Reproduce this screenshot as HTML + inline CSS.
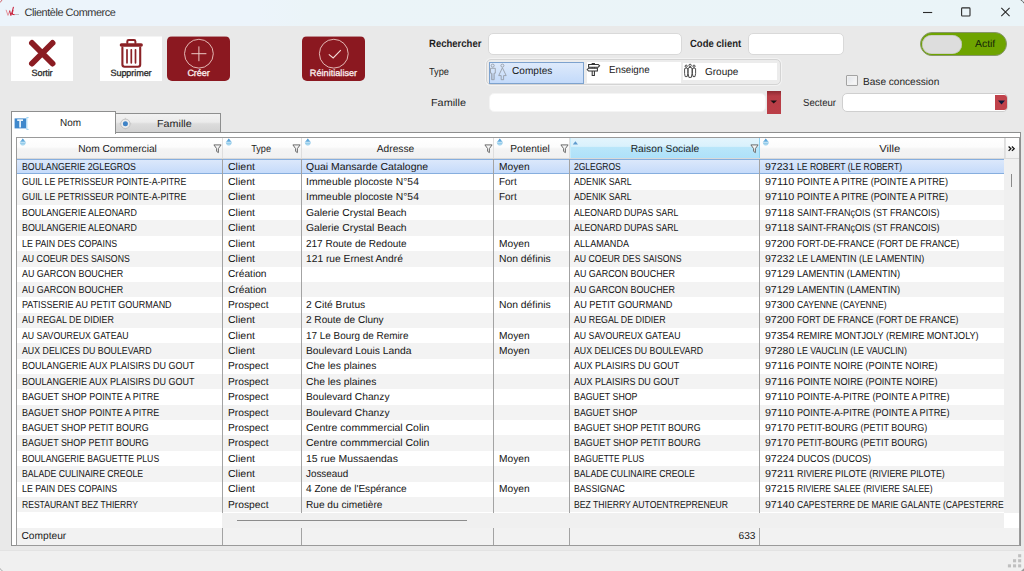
<!DOCTYPE html>
<html lang="fr"><head><meta charset="utf-8"><title>Clientèle Commerce</title>
<style>
*{box-sizing:border-box;margin:0;padding:0}
html,body{width:1024px;height:571px;overflow:hidden}
body{position:relative;background:#e9e9e9;font-family:"Liberation Sans",sans-serif;color:#1b1b1b;font-size:10px;text-rendering:geometricPrecision}
.abs,#titlebar,#panel,#grid,.btn,.lbl,.inp{position:absolute}
#titlebar{left:0;top:0;width:1024px;height:25.5px;background:linear-gradient(90deg,#ecf4fb 0%,#ecf4fb 25%,#ebf4f8 30%,#eaf4f8 100%)}
#title{position:absolute;left:24.5px;top:5.8px;font-size:10.9px;line-height:14px;color:#333;white-space:nowrap;letter-spacing:-0.43px}
#status{position:absolute;left:0;top:551px;width:1024px;height:20px;background:#f0f0f0}
/* big buttons */
.btn{top:36px;height:45px;width:62px;background:linear-gradient(rgba(255,255,255,.5) 0,rgba(255,255,255,.5) 1px,#fff 1px)}
.btn.red{background:linear-gradient(rgba(139,24,32,.45) 0,rgba(139,24,32,.45) 1px,#8b1820 1px);border-radius:5px}
.btn svg{top:1px!important}
.btn .t{position:absolute;left:0;right:0;top:31.8px;text-align:center;font-size:9.1px;line-height:10px;font-weight:normal;-webkit-text-stroke:0.3px #2a2a2a;color:#2a2a2a;white-space:nowrap;letter-spacing:-0.1px}
.btn.red .t{color:#fbeeee;-webkit-text-stroke:0.3px #fbeeee}
.btn svg{position:absolute;left:0;top:0}
/* labels */
.lbl{font-size:10.2px;line-height:12px;white-space:nowrap;color:#1e1e1e;transform-origin:0 50%}
.lbl.b{font-weight:bold;font-size:10.5px}
.inp{background:#fff;border:1px solid #d9d9d9;border-radius:5px}
/* type group */
#tg{position:absolute;left:486px;top:59px;width:295px;height:26px;border:1px solid #d4d4d4;border-radius:5px;background:#ececec;box-shadow:0 0 0 1px #f3f3f3}
.tb{position:absolute;background:#fff;font-size:10.2px;line-height:12px;white-space:nowrap}
.tb span{position:absolute;transform-origin:0 50%}
/* tabs */
#tabnom{position:absolute;left:11px;top:111px;width:105px;height:23px;background:#fff;border:1px solid #8e8f8f;border-bottom:none}
#tabfam{position:absolute;left:115px;top:113px;width:106px;height:20px;background:linear-gradient(#f2f2f2,#ebebeb 45%,#dcdcdc 55%,#d2d2d2);border:1px solid #8e8f8f}
.tabt{position:absolute;font-size:10.6px;line-height:12px;white-space:nowrap;color:#1e1e1e}
#panel{left:11px;top:132px;width:1010px;height:414px;background:#fff;border:1px solid #8e8f8f}
#grid{left:16px;top:137px;width:1004px;height:409px;border:1px solid #9a9a9a;background:#fff;overflow:hidden}
.row{position:absolute;left:0;width:987px;background:#fff}
.row.alt{background:#f3f3f3}
.row.sel{background:linear-gradient(#dde9fb,#c4dafa);box-shadow:inset 0 1px 0 #86aede,inset 0 -1px 0 #86aede}
.c{position:absolute;top:0;bottom:0;overflow:hidden;white-space:nowrap;font-size:10.2px;line-height:15px;padding-left:4.5px;color:#161616}
.c i{font-style:normal;display:inline-block;transform-origin:0 50%}
.vs{position:absolute;width:1px;background:#a3a3a3}
.hd{position:absolute;top:0;height:20px;background:linear-gradient(#ffffff 0%,#fcfcfc 45%,#f4f4f4 55%,#f1f1f1 100%);border-right:1px solid #dedede;font-size:10.2px;line-height:12px;text-align:center;color:#1e1e1e;white-space:nowrap}
.hd .ht{position:absolute;left:0;right:0;top:5.5px}
.hd.hl{background:linear-gradient(#e3f5fd 0%,#d9f1fc 42%,#b9e6fa 46%,#aee1f9 100%);border-right:1px solid #8fd0ee;box-shadow:inset 1px 0 0 #c5ebfb}
.hd svg{position:absolute}
.ft{position:absolute;font-size:10.2px;line-height:12px;white-space:nowrap;color:#1c1c1c}

</style></head>
<body>
<div id="titlebar">
<svg class="abs" style="left:0;top:0" width="24" height="26" viewBox="0 0 24 26"><path d="M0 2.2 Q1.4 1.8 1.9 0" fill="none" stroke="#cf5a62" stroke-width="0.9"/><path d="M6.2 10.2 L8 15.4 L9.7 11" fill="none" stroke="#e3929b" stroke-width="1" stroke-linejoin="round" stroke-linecap="round"/><path d="M9.7 11 L10.9 15.4 Q12.6 11.4 13.4 7.2" fill="none" stroke="#c8203a" stroke-width="1.05" stroke-linejoin="round" stroke-linecap="round"/><path d="M12.9 10.4 Q12.3 12.8 12.5 14.5 L14.3 14.6" fill="none" stroke="#c8203a" stroke-width="1" stroke-linecap="round"/><path d="M14.9 14.5 H19" stroke="#b4b4b8" stroke-width="0.8"/></svg>
<div id="title">Clientèle Commerce</div>
<svg class="abs" style="left:916px;top:0" width="108" height="26" viewBox="0 0 108 26"><path d="M7 12.5 H16.2" stroke="#2b2b2b" stroke-width="1.1" fill="none"/><rect x="45.6" y="7.9" width="8.4" height="8.1" rx="0.8" fill="none" stroke="#2b2b2b" stroke-width="1.1"/><path d="M85.3 7.8 L93.6 16.2 M93.6 7.8 L85.3 16.2" stroke="#2b2b2b" stroke-width="1.1" fill="none"/><path d="M104.6 0 Q107.2 0.8 108 3.4" stroke="#6a6a6a" stroke-width="1" fill="none"/></svg>
</div>
<div id="status"></div>
<svg class="abs" style="left:1004px;top:551px" width="20" height="20" viewBox="0 0 20 20"><g fill="#c0c0c0"><rect x="14.1" y="3.2" width="3.1" height="3.1"/><rect x="9" y="8.2" width="3.1" height="3.1"/><rect x="14.1" y="8.2" width="3.1" height="3.1"/><rect x="3.9" y="13.3" width="3.1" height="3.1"/><rect x="9" y="13.3" width="3.1" height="3.1"/><rect x="14.1" y="13.3" width="3.1" height="3.1"/></g><path d="M20 17.2 L17 20 L20 20 Z" fill="#9a9a9a"/></svg>
<svg class="abs" style="left:0;top:561px" width="10" height="10" viewBox="0 0 10 10"><path d="M0 7.2 Q0.6 9.4 2.8 10" fill="none" stroke="#b4b4b4" stroke-width="1"/></svg>
<div class="abs" style="left:0;top:550px;width:1024px;height:1px;background:#e3e3e3"></div>

<!-- big buttons -->
<div class="btn" style="left:11px"><svg width="62" height="44" viewBox="0 0 62 44"><path d="M21 6 L41.5 26.5 M41.5 6 L21 26.5" stroke="#8b1c22" stroke-width="5.9" stroke-linecap="round" fill="none"/></svg><div class="t" style="letter-spacing:-0.15px">Sortir</div></div>
<div class="btn" style="left:100px"><svg width="62" height="44" viewBox="0 0 62 44"><g fill="none" stroke="#8b2226" stroke-linecap="round" stroke-linejoin="round"><path d="M27.3 6 V4.4 Q27.3 3 28.7 3 H34 Q35.4 3 35.4 4.4 V6" stroke-width="2"/><path d="M21.4 8 H41.2" stroke-width="3.4"/><path d="M22.4 10.5 V27.6 Q22.4 29.8 24.6 29.8 H38 Q40.2 29.8 40.2 27.6 V10.5" stroke-width="2.1"/><path d="M27 12.8 V25.8 M31.3 12.8 V25.8 M35.5 12.8 V25.8" stroke-width="1.7"/></g></svg><div class="t">Supprimer</div></div>
<div class="btn red" style="left:167px;width:63px"><svg width="63" height="44" viewBox="0 0 63 44"><circle cx="31.9" cy="16.7" r="14.4" fill="none" stroke="#ecc9c4" stroke-width="0.9"/><path d="M24.4 16.7 H39.4 M31.9 9.4 V24.2" stroke="#ecc9c4" stroke-width="1" fill="none"/></svg><div class="t">Créer</div></div>
<div class="btn red" style="left:302px;width:63px"><svg width="63" height="44" viewBox="0 0 63 44"><circle cx="31.8" cy="16.7" r="14.4" fill="none" stroke="#ecc9c4" stroke-width="0.9"/><path d="M26.8 17.3 L31.2 21 L38.8 13.1" stroke="#f4dcd8" stroke-width="1.1" fill="none"/></svg><div class="t" style="letter-spacing:0.02px">Réinitialiser</div></div>

<!-- search area -->
<div class="lbl b" style="left:428.8px;top:38.1px;transform:scaleX(0.907)">Rechercher</div>
<div class="inp" style="left:488px;top:33px;width:194px;height:22px"></div>
<div class="lbl b" style="left:689.6px;top:38.1px;transform:scaleX(0.903)">Code client</div>
<div class="inp" style="left:748px;top:33px;width:96px;height:22px"></div>

<div class="lbl" style="left:429px;top:67.3px;transform:scaleX(0.905)">Type</div>
<div id="tg">
 <div class="tb" style="left:2px;top:1.5px;width:95px;height:22px;background:linear-gradient(#deeafb,#c3dafa);border:1px solid #7da2ce">
  <svg style="position:absolute;left:0;top:0" width="20" height="20" viewBox="0 0 20 20"><g fill="none" stroke="#8f969e" stroke-width="0.8"><circle cx="2.7" cy="2.6" r="1.5"/><path d="M0.5 5.3 H5.3 V10.2 H4.2 V16.7 H1.6 V10.2 H0.5 Z"/><path d="M2.9 10.4 V16.4" stroke-width="0.5"/><circle cx="12.4" cy="2.6" r="1.5"/><path d="M12.4 4.8 L8.7 12.6 H11.2 V16.7 H13.6 V12.6 H16.2 Z"/></g></svg>
  <span style="left:21.8px;top:3.1px;transform:scaleX(0.99)">Comptes</span></div>
 <div class="tb" style="left:100px;top:2px;width:93.5px;height:21px">
  <svg style="position:absolute;left:-1px;top:0px" width="16" height="16" viewBox="0 0 16 16"><g fill="none" stroke="#333" stroke-width="1.05"><path d="M6.2 1.4 H8.4 V13.4 H6.2 Z"/><path d="M2.6 2.4 H12.2 L13.6 3.8 L12.2 5.2 H2.6 Z" fill="#fff"/><path d="M1.2 7.6 L2.6 6.2 H11.4 V9 H2.6 Z" fill="#fff"/></g></svg>
  <span style="left:21.6px;top:3.3px;transform:scaleX(0.956)">Enseigne</span></div>
 <div class="tb" style="left:196px;top:2.5px;width:94px;height:17.5px">
  <svg style="position:absolute;left:0.2px;top:0px" width="16" height="16" viewBox="0 0 16 16"><g fill="#fff" stroke="#3a3a3a" stroke-width="0.9"><circle cx="3.2" cy="3.2" r="1.1"/><path d="M1.6 5.6 Q3.2 4.4 4.8 5.6 V10.6 L4.2 13.6 H2.2 L1.6 10.6 Z"/><circle cx="11" cy="3.2" r="1.1"/><path d="M9.4 5.6 Q11 4.4 12.6 5.6 V10.6 L12 13.6 H10 L9.4 10.6 Z"/><circle cx="7.1" cy="2.4" r="1.2"/><path d="M5.2 5 Q7.1 3.6 9 5 V10.8 L8.3 14.4 H5.9 L5.2 10.8 Z"/></g></svg>
  <span style="left:22px;top:4.4px;transform:scaleX(0.98)">Groupe</span></div>
</div>

<div class="lbl" style="left:430.5px;top:97.9px;transform:scaleX(1.063)">Famille</div>
<div class="inp" style="left:489px;top:93px;width:277px;height:19px;border-color:#f4f4f4"></div>
<div class="abs" style="left:767px;top:91px;width:13.5px;height:23px;background:linear-gradient(#8e2a32 0%,#b73c45 22%,#bb3f48 100%)"><svg style="position:absolute;left:0;top:0" width="14" height="22" viewBox="0 0 14 22"><path d="M3.4 9.4 H10 L6.7 12.6 Z" fill="#1a1114"/></svg></div>

<!-- toggle -->
<div class="abs" style="left:920px;top:32px;width:87px;height:24px;border-radius:12px;background:#6ea400;border:1px solid #87976a"></div>
<div class="abs" style="left:922px;top:34.5px;width:39.5px;height:19.5px;border-radius:10px;background:#dddddd;box-shadow:inset 0 0 0 0.6px #b9c2a8"></div>
<div class="lbl" style="left:974.8px;top:38.8px;color:#14230a;transform:scaleX(1.02)">Actif</div>

<div class="abs" style="left:846px;top:75px;width:12px;height:11px;border:1px solid #a3a3a3;border-radius:1px;background:linear-gradient(135deg,#dde1e8,#f6f6f6 75%);box-shadow:inset 0 0 0 1.2px #f1f1f1"></div>
<div class="lbl" style="left:863.4px;top:77px;transform:scaleX(0.99)">Base concession</div>

<div class="lbl" style="left:803.2px;top:97.6px;transform:scaleX(0.94)">Secteur</div>
<div class="inp" style="left:842px;top:93px;width:166px;height:19px;border-color:#cfcfcf"></div>
<div class="abs" style="left:994.5px;top:95px;width:12.5px;height:14.5px;background:#c0424b;border-radius:0 3px 3px 0"><svg style="position:absolute;left:0;top:0" width="13" height="15" viewBox="0 0 13 15"><path d="M3 5.6 H10 L6.5 9.4 Z" fill="#0e1a3c"/></svg></div>

<!-- tabs -->
<div id="tabfam"><svg style="position:absolute;left:2px;top:2px" width="16" height="16" viewBox="0 0 16 16"><circle cx="7.4" cy="7.8" r="4.7" fill="#ececec" stroke="#b9b9b9" stroke-width="0.8"/><path d="M7.4 1.8 V3.6 M7.4 12 V13.8 M1.4 7.8 H3.2 M11.6 7.8 H13.4" stroke="#c4c4c4" stroke-width="0.7"/><circle cx="7.4" cy="7.8" r="2.5" fill="#3f83c6"/></svg><div class="tabt" style="left:40.7px;top:5px;font-size:10.2px;transform-origin:0 50%;transform:scaleX(1.055)">Famille</div></div>
<div id="panel"></div>
<div id="tabnom"><svg style="position:absolute;left:1.5px;top:5px" width="16" height="14" viewBox="0 0 16 14"><rect x="0.6" y="1.4" width="11.4" height="10" fill="#3f88cc"/><path d="M12.4 0.6 H14.6 M12.4 12.4 H14.6 M12.8 1 V12" stroke="#7dc3ee" stroke-width="0.8" fill="none"/><path d="M3.2 3.2 H9 M6.1 3.2 V10.4" stroke="#e9f4fc" stroke-width="1.7" fill="none"/></svg><div class="tabt" style="left:48.2px;top:6.2px;font-size:10.2px;transform-origin:0 50%;transform:scaleX(0.977)">Nom</div></div>
<div id="grid">
<div class="row sel" style="top:21px;height:15px"><span class="c c0" style="left:0px;width:205px;padding-left:4.6px"><i style="transform:translateY(0.75px) scaleX(0.8590)">BOULANGERIE 2GLEGROS</i></span><span class="c c1" style="left:206px;width:78px;padding-left:4.7px"><i style="transform:translateY(0.75px) scaleX(1.0328)">Client</i></span><span class="c c2" style="left:285px;width:191px;padding-left:3.9px"><i style="transform:translateY(0.75px) scaleX(1.0266)">Quai Mansarde Catalogne</i></span><span class="c c3" style="left:477px;width:75px;padding-left:4.7px"><i style="transform:translateY(0.75px) scaleX(1.0007)">Moyen</i></span><span class="c c4" style="left:553px;width:189px;padding-left:4.3px"><i style="transform:translateY(0.75px) scaleX(0.8348)">2GLEGROS</i></span><span class="c c5" style="left:743px;width:244px;padding-left:4.5px"><i style="width:32.3px;transform:translateY(0.75px) scaleX(1.0362)">97231&nbsp;</i><i style="transform:translateY(0.75px) scaleX(0.8430)">LE ROBERT (LE ROBERT)</i></span></div>
<div class="row" style="top:36px;height:16px"><span class="c c0" style="left:0px;width:205px;padding-left:4.6px"><i style="transform:translateY(1.11px) scaleX(0.8604)">GUIL LE PETRISSEUR POINTE-A-PITRE</i></span><span class="c c1" style="left:206px;width:78px;padding-left:4.7px"><i style="transform:translateY(1.11px) scaleX(1.0328)">Client</i></span><span class="c c2" style="left:285px;width:191px;padding-left:3.9px"><i style="transform:translateY(1.11px) scaleX(1.0161)">Immeuble plocoste N°54</i></span><span class="c c3" style="left:477px;width:75px;padding-left:4.7px"><i style="transform:translateY(1.11px) scaleX(0.9766)">Fort</i></span><span class="c c4" style="left:553px;width:189px;padding-left:4.3px"><i style="transform:translateY(1.11px) scaleX(0.8534)">ADENIK SARL</i></span><span class="c c5" style="left:743px;width:244px;padding-left:4.5px"><i style="width:32.3px;transform:translateY(1.11px) scaleX(1.0623)">97110&nbsp;</i><i style="transform:translateY(1.11px) scaleX(0.8981)">POINTE A PITRE (POINTE A PITRE)</i></span></div>
<div class="row alt" style="top:52px;height:15px"><span class="c c0" style="left:0px;width:205px;padding-left:4.6px"><i style="transform:translateY(0.47px) scaleX(0.8604)">GUIL LE PETRISSEUR POINTE-A-PITRE</i></span><span class="c c1" style="left:206px;width:78px;padding-left:4.7px"><i style="transform:translateY(0.47px) scaleX(1.0328)">Client</i></span><span class="c c2" style="left:285px;width:191px;padding-left:3.9px"><i style="transform:translateY(0.47px) scaleX(1.0161)">Immeuble plocoste N°54</i></span><span class="c c3" style="left:477px;width:75px;padding-left:4.7px"><i style="transform:translateY(0.47px) scaleX(0.9766)">Fort</i></span><span class="c c4" style="left:553px;width:189px;padding-left:4.3px"><i style="transform:translateY(0.47px) scaleX(0.8534)">ADENIK SARL</i></span><span class="c c5" style="left:743px;width:244px;padding-left:4.5px"><i style="width:32.3px;transform:translateY(0.47px) scaleX(1.0623)">97110&nbsp;</i><i style="transform:translateY(0.47px) scaleX(0.8981)">POINTE A PITRE (POINTE A PITRE)</i></span></div>
<div class="row" style="top:67px;height:15px"><span class="c c0" style="left:0px;width:205px;padding-left:4.6px"><i style="transform:translateY(0.83px) scaleX(0.8702)">BOULANGERIE ALEONARD</i></span><span class="c c1" style="left:206px;width:78px;padding-left:4.7px"><i style="transform:translateY(0.83px) scaleX(1.0328)">Client</i></span><span class="c c2" style="left:285px;width:191px;padding-left:3.9px"><i style="transform:translateY(0.83px) scaleX(1.0152)">Galerie Crystal Beach</i></span><span class="c c4" style="left:553px;width:189px;padding-left:4.3px"><i style="transform:translateY(0.83px) scaleX(0.8502)">ALEONARD DUPAS SARL</i></span><span class="c c5" style="left:743px;width:244px;padding-left:4.5px"><i style="width:32.3px;transform:translateY(0.83px) scaleX(1.0623)">97118&nbsp;</i><i style="transform:translateY(0.83px) scaleX(0.8844)">SAINT-FRANçOIS (ST FRANCOIS)</i></span></div>
<div class="row alt" style="top:82px;height:16px"><span class="c c0" style="left:0px;width:205px;padding-left:4.6px"><i style="transform:translateY(1.19px) scaleX(0.8702)">BOULANGERIE ALEONARD</i></span><span class="c c1" style="left:206px;width:78px;padding-left:4.7px"><i style="transform:translateY(1.19px) scaleX(1.0328)">Client</i></span><span class="c c2" style="left:285px;width:191px;padding-left:3.9px"><i style="transform:translateY(1.19px) scaleX(1.0152)">Galerie Crystal Beach</i></span><span class="c c4" style="left:553px;width:189px;padding-left:4.3px"><i style="transform:translateY(1.19px) scaleX(0.8502)">ALEONARD DUPAS SARL</i></span><span class="c c5" style="left:743px;width:244px;padding-left:4.5px"><i style="width:32.3px;transform:translateY(1.19px) scaleX(1.0623)">97118&nbsp;</i><i style="transform:translateY(1.19px) scaleX(0.8844)">SAINT-FRANçOIS (ST FRANCOIS)</i></span></div>
<div class="row" style="top:98px;height:15px"><span class="c c0" style="left:0px;width:205px;padding-left:4.6px"><i style="transform:translateY(0.55px) scaleX(0.8652)">LE PAIN DES COPAINS</i></span><span class="c c1" style="left:206px;width:78px;padding-left:4.7px"><i style="transform:translateY(0.55px) scaleX(1.0328)">Client</i></span><span class="c c2" style="left:285px;width:191px;padding-left:3.9px"><i style="transform:translateY(0.55px) scaleX(0.9812)">217 Route de Redoute</i></span><span class="c c3" style="left:477px;width:75px;padding-left:4.7px"><i style="transform:translateY(0.55px) scaleX(1.0007)">Moyen</i></span><span class="c c4" style="left:553px;width:189px;padding-left:4.3px"><i style="transform:translateY(0.55px) scaleX(0.8911)">ALLAMANDA</i></span><span class="c c5" style="left:743px;width:244px;padding-left:4.5px"><i style="width:32.3px;transform:translateY(0.55px) scaleX(1.0362)">97200&nbsp;</i><i style="transform:translateY(0.55px) scaleX(0.8605)">FORT-DE-FRANCE (FORT DE FRANCE)</i></span></div>
<div class="row alt" style="top:113px;height:16px"><span class="c c0" style="left:0px;width:205px;padding-left:4.6px"><i style="transform:translateY(0.91px) scaleX(0.8577)">AU COEUR DES SAISONS</i></span><span class="c c1" style="left:206px;width:78px;padding-left:4.7px"><i style="transform:translateY(0.91px) scaleX(1.0328)">Client</i></span><span class="c c2" style="left:285px;width:191px;padding-left:3.9px"><i style="transform:translateY(0.91px) scaleX(1.0064)">121 rue Ernest André</i></span><span class="c c3" style="left:477px;width:75px;padding-left:4.7px"><i style="transform:translateY(0.91px) scaleX(1.0143)">Non définis</i></span><span class="c c4" style="left:553px;width:189px;padding-left:4.3px"><i style="transform:translateY(0.91px) scaleX(0.8569)">AU COEUR DES SAISONS</i></span><span class="c c5" style="left:743px;width:244px;padding-left:4.5px"><i style="width:32.3px;transform:translateY(0.91px) scaleX(1.0362)">97232&nbsp;</i><i style="transform:translateY(0.91px) scaleX(0.8895)">LE LAMENTIN (LE LAMENTIN)</i></span></div>
<div class="row" style="top:129px;height:15px"><span class="c c0" style="left:0px;width:205px;padding-left:4.6px"><i style="transform:translateY(0.27px) scaleX(0.8754)">AU GARCON BOUCHER</i></span><span class="c c1" style="left:206px;width:78px;padding-left:4.7px"><i style="transform:translateY(0.27px) scaleX(0.9996)">Création</i></span><span class="c c4" style="left:553px;width:189px;padding-left:4.3px"><i style="transform:translateY(0.27px) scaleX(0.8746)">AU GARCON BOUCHER</i></span><span class="c c5" style="left:743px;width:244px;padding-left:4.5px"><i style="width:32.3px;transform:translateY(0.27px) scaleX(1.0362)">97129&nbsp;</i><i style="transform:translateY(0.27px) scaleX(0.9162)">LAMENTIN (LAMENTIN)</i></span></div>
<div class="row alt" style="top:144px;height:15px"><span class="c c0" style="left:0px;width:205px;padding-left:4.6px"><i style="transform:translateY(0.63px) scaleX(0.8754)">AU GARCON BOUCHER</i></span><span class="c c1" style="left:206px;width:78px;padding-left:4.7px"><i style="transform:translateY(0.63px) scaleX(0.9996)">Création</i></span><span class="c c4" style="left:553px;width:189px;padding-left:4.3px"><i style="transform:translateY(0.63px) scaleX(0.8746)">AU GARCON BOUCHER</i></span><span class="c c5" style="left:743px;width:244px;padding-left:4.5px"><i style="width:32.3px;transform:translateY(0.63px) scaleX(1.0362)">97129&nbsp;</i><i style="transform:translateY(0.63px) scaleX(0.9162)">LAMENTIN (LAMENTIN)</i></span></div>
<div class="row" style="top:159px;height:16px"><span class="c c0" style="left:0px;width:205px;padding-left:4.6px"><i style="transform:translateY(0.99px) scaleX(0.8809)">PATISSERIE AU PETIT GOURMAND</i></span><span class="c c1" style="left:206px;width:78px;padding-left:4.7px"><i style="transform:translateY(0.99px) scaleX(1.0074)">Prospect</i></span><span class="c c2" style="left:285px;width:191px;padding-left:3.9px"><i style="transform:translateY(0.99px) scaleX(1.0053)">2 Cité Brutus</i></span><span class="c c3" style="left:477px;width:75px;padding-left:4.7px"><i style="transform:translateY(0.99px) scaleX(1.0143)">Non définis</i></span><span class="c c4" style="left:553px;width:189px;padding-left:4.3px"><i style="transform:translateY(0.99px) scaleX(0.9032)">AU PETIT GOURMAND</i></span><span class="c c5" style="left:743px;width:244px;padding-left:4.5px"><i style="width:32.3px;transform:translateY(0.99px) scaleX(1.0362)">97300&nbsp;</i><i style="transform:translateY(0.99px) scaleX(0.8395)">CAYENNE (CAYENNE)</i></span></div>
<div class="row alt" style="top:175px;height:15px"><span class="c c0" style="left:0px;width:205px;padding-left:4.6px"><i style="transform:translateY(0.35px) scaleX(0.8712)">AU REGAL DE DIDIER</i></span><span class="c c1" style="left:206px;width:78px;padding-left:4.7px"><i style="transform:translateY(0.35px) scaleX(1.0328)">Client</i></span><span class="c c2" style="left:285px;width:191px;padding-left:3.9px"><i style="transform:translateY(0.35px) scaleX(0.9856)">2 Route de Cluny</i></span><span class="c c4" style="left:553px;width:189px;padding-left:4.3px"><i style="transform:translateY(0.35px) scaleX(0.8684)">AU REGAL DE DIDIER</i></span><span class="c c5" style="left:743px;width:244px;padding-left:4.5px"><i style="width:32.3px;transform:translateY(0.35px) scaleX(1.0362)">97200&nbsp;</i><i style="transform:translateY(0.35px) scaleX(0.8597)">FORT DE FRANCE (FORT DE FRANCE)</i></span></div>
<div class="row" style="top:190px;height:15px"><span class="c c0" style="left:0px;width:205px;padding-left:4.6px"><i style="transform:translateY(0.71px) scaleX(0.8593)">AU SAVOUREUX GATEAU</i></span><span class="c c1" style="left:206px;width:78px;padding-left:4.7px"><i style="transform:translateY(0.71px) scaleX(1.0328)">Client</i></span><span class="c c2" style="left:285px;width:191px;padding-left:3.9px"><i style="transform:translateY(0.71px) scaleX(0.9721)">17 Le Bourg de Remire</i></span><span class="c c3" style="left:477px;width:75px;padding-left:4.7px"><i style="transform:translateY(0.71px) scaleX(1.0007)">Moyen</i></span><span class="c c4" style="left:553px;width:189px;padding-left:4.3px"><i style="transform:translateY(0.71px) scaleX(0.8577)">AU SAVOUREUX GATEAU</i></span><span class="c c5" style="left:743px;width:244px;padding-left:4.5px"><i style="width:32.3px;transform:translateY(0.71px) scaleX(1.0362)">97354&nbsp;</i><i style="transform:translateY(0.71px) scaleX(0.8912)">REMIRE MONTJOLY (REMIRE MONTJOLY)</i></span></div>
<div class="row alt" style="top:205px;height:16px"><span class="c c0" style="left:0px;width:205px;padding-left:4.6px"><i style="transform:translateY(1.07px) scaleX(0.8642)">AUX DELICES DU BOULEVARD</i></span><span class="c c1" style="left:206px;width:78px;padding-left:4.7px"><i style="transform:translateY(1.07px) scaleX(1.0328)">Client</i></span><span class="c c2" style="left:285px;width:191px;padding-left:3.9px"><i style="transform:translateY(1.07px) scaleX(1.0113)">Boulevard Louis Landa</i></span><span class="c c3" style="left:477px;width:75px;padding-left:4.7px"><i style="transform:translateY(1.07px) scaleX(1.0007)">Moyen</i></span><span class="c c4" style="left:553px;width:189px;padding-left:4.3px"><i style="transform:translateY(1.07px) scaleX(0.8616)">AUX DELICES DU BOULEVARD</i></span><span class="c c5" style="left:743px;width:244px;padding-left:4.5px"><i style="width:32.3px;transform:translateY(1.07px) scaleX(1.0362)">97280&nbsp;</i><i style="transform:translateY(1.07px) scaleX(0.8654)">LE VAUCLIN (LE VAUCLIN)</i></span></div>
<div class="row" style="top:221px;height:15px"><span class="c c0" style="left:0px;width:205px;padding-left:4.6px"><i style="transform:translateY(0.43px) scaleX(0.8827)">BOULANGERIE AUX PLAISIRS DU GOUT</i></span><span class="c c1" style="left:206px;width:78px;padding-left:4.7px"><i style="transform:translateY(0.43px) scaleX(1.0074)">Prospect</i></span><span class="c c2" style="left:285px;width:191px;padding-left:3.9px"><i style="transform:translateY(0.43px) scaleX(1.0107)">Che les plaines</i></span><span class="c c4" style="left:553px;width:189px;padding-left:4.3px"><i style="transform:translateY(0.43px) scaleX(0.8815)">AUX PLAISIRS DU GOUT</i></span><span class="c c5" style="left:743px;width:244px;padding-left:4.5px"><i style="width:32.3px;transform:translateY(0.43px) scaleX(1.0623)">97116&nbsp;</i><i style="transform:translateY(0.43px) scaleX(0.9026)">POINTE NOIRE (POINTE NOIRE)</i></span></div>
<div class="row alt" style="top:236px;height:15px"><span class="c c0" style="left:0px;width:205px;padding-left:4.6px"><i style="transform:translateY(0.79px) scaleX(0.8827)">BOULANGERIE AUX PLAISIRS DU GOUT</i></span><span class="c c1" style="left:206px;width:78px;padding-left:4.7px"><i style="transform:translateY(0.79px) scaleX(1.0074)">Prospect</i></span><span class="c c2" style="left:285px;width:191px;padding-left:3.9px"><i style="transform:translateY(0.79px) scaleX(1.0107)">Che les plaines</i></span><span class="c c4" style="left:553px;width:189px;padding-left:4.3px"><i style="transform:translateY(0.79px) scaleX(0.8815)">AUX PLAISIRS DU GOUT</i></span><span class="c c5" style="left:743px;width:244px;padding-left:4.5px"><i style="width:32.3px;transform:translateY(0.79px) scaleX(1.0623)">97116&nbsp;</i><i style="transform:translateY(0.79px) scaleX(0.9026)">POINTE NOIRE (POINTE NOIRE)</i></span></div>
<div class="row" style="top:251px;height:16px"><span class="c c0" style="left:0px;width:205px;padding-left:4.6px"><i style="transform:translateY(1.15px) scaleX(0.8834)">BAGUET SHOP POINTE A PITRE</i></span><span class="c c1" style="left:206px;width:78px;padding-left:4.7px"><i style="transform:translateY(1.15px) scaleX(1.0074)">Prospect</i></span><span class="c c2" style="left:285px;width:191px;padding-left:3.9px"><i style="transform:translateY(1.15px) scaleX(1.0030)">Boulevard Chanzy</i></span><span class="c c4" style="left:553px;width:189px;padding-left:4.3px"><i style="transform:translateY(1.15px) scaleX(0.8649)">BAGUET SHOP</i></span><span class="c c5" style="left:743px;width:244px;padding-left:4.5px"><i style="width:32.3px;transform:translateY(1.15px) scaleX(1.0623)">97110&nbsp;</i><i style="transform:translateY(1.15px) scaleX(0.8950)">POINTE-A-PITRE (POINTE A PITRE)</i></span></div>
<div class="row alt" style="top:267px;height:15px"><span class="c c0" style="left:0px;width:205px;padding-left:4.6px"><i style="transform:translateY(0.51px) scaleX(0.8834)">BAGUET SHOP POINTE A PITRE</i></span><span class="c c1" style="left:206px;width:78px;padding-left:4.7px"><i style="transform:translateY(0.51px) scaleX(1.0074)">Prospect</i></span><span class="c c2" style="left:285px;width:191px;padding-left:3.9px"><i style="transform:translateY(0.51px) scaleX(1.0030)">Boulevard Chanzy</i></span><span class="c c4" style="left:553px;width:189px;padding-left:4.3px"><i style="transform:translateY(0.51px) scaleX(0.8649)">BAGUET SHOP</i></span><span class="c c5" style="left:743px;width:244px;padding-left:4.5px"><i style="width:32.3px;transform:translateY(0.51px) scaleX(1.0623)">97110&nbsp;</i><i style="transform:translateY(0.51px) scaleX(0.8950)">POINTE-A-PITRE (POINTE A PITRE)</i></span></div>
<div class="row" style="top:282px;height:15px"><span class="c c0" style="left:0px;width:205px;padding-left:4.6px"><i style="transform:translateY(0.87px) scaleX(0.8742)">BAGUET SHOP PETIT BOURG</i></span><span class="c c1" style="left:206px;width:78px;padding-left:4.7px"><i style="transform:translateY(0.87px) scaleX(1.0074)">Prospect</i></span><span class="c c2" style="left:285px;width:191px;padding-left:3.9px"><i style="transform:translateY(0.87px) scaleX(1.0281)">Centre commmercial Colin</i></span><span class="c c4" style="left:553px;width:189px;padding-left:4.3px"><i style="transform:translateY(0.87px) scaleX(0.8735)">BAGUET SHOP PETIT BOURG</i></span><span class="c c5" style="left:743px;width:244px;padding-left:4.5px"><i style="width:32.3px;transform:translateY(0.87px) scaleX(1.0362)">97170&nbsp;</i><i style="transform:translateY(0.87px) scaleX(0.8831)">PETIT-BOURG (PETIT BOURG)</i></span></div>
<div class="row alt" style="top:297px;height:16px"><span class="c c0" style="left:0px;width:205px;padding-left:4.6px"><i style="transform:translateY(1.23px) scaleX(0.8742)">BAGUET SHOP PETIT BOURG</i></span><span class="c c1" style="left:206px;width:78px;padding-left:4.7px"><i style="transform:translateY(1.23px) scaleX(1.0074)">Prospect</i></span><span class="c c2" style="left:285px;width:191px;padding-left:3.9px"><i style="transform:translateY(1.23px) scaleX(1.0281)">Centre commmercial Colin</i></span><span class="c c4" style="left:553px;width:189px;padding-left:4.3px"><i style="transform:translateY(1.23px) scaleX(0.8735)">BAGUET SHOP PETIT BOURG</i></span><span class="c c5" style="left:743px;width:244px;padding-left:4.5px"><i style="width:32.3px;transform:translateY(1.23px) scaleX(1.0362)">97170&nbsp;</i><i style="transform:translateY(1.23px) scaleX(0.8831)">PETIT-BOURG (PETIT BOURG)</i></span></div>
<div class="row" style="top:313px;height:15px"><span class="c c0" style="left:0px;width:205px;padding-left:4.6px"><i style="transform:translateY(0.59px) scaleX(0.8533)">BOULANGERIE BAGUETTE PLUS</i></span><span class="c c1" style="left:206px;width:78px;padding-left:4.7px"><i style="transform:translateY(0.59px) scaleX(1.0328)">Client</i></span><span class="c c2" style="left:285px;width:191px;padding-left:3.9px"><i style="transform:translateY(0.59px) scaleX(1.0270)">15 rue Mussaendas</i></span><span class="c c3" style="left:477px;width:75px;padding-left:4.7px"><i style="transform:translateY(0.59px) scaleX(1.0007)">Moyen</i></span><span class="c c4" style="left:553px;width:189px;padding-left:4.3px"><i style="transform:translateY(0.59px) scaleX(0.8322)">BAGUETTE PLUS</i></span><span class="c c5" style="left:743px;width:244px;padding-left:4.5px"><i style="width:32.3px;transform:translateY(0.59px) scaleX(1.0362)">97224&nbsp;</i><i style="transform:translateY(0.59px) scaleX(0.8906)">DUCOS (DUCOS)</i></span></div>
<div class="row alt" style="top:328px;height:16px"><span class="c c0" style="left:0px;width:205px;padding-left:4.6px"><i style="transform:translateY(0.95px) scaleX(0.8515)">BALADE CULINAIRE CREOLE</i></span><span class="c c1" style="left:206px;width:78px;padding-left:4.7px"><i style="transform:translateY(0.95px) scaleX(1.0328)">Client</i></span><span class="c c2" style="left:285px;width:191px;padding-left:3.9px"><i style="transform:translateY(0.95px) scaleX(0.9673)">Josseaud</i></span><span class="c c4" style="left:553px;width:189px;padding-left:4.3px"><i style="transform:translateY(0.95px) scaleX(0.8508)">BALADE CULINAIRE CREOLE</i></span><span class="c c5" style="left:743px;width:244px;padding-left:4.5px"><i style="width:32.3px;transform:translateY(0.95px) scaleX(1.0623)">97211&nbsp;</i><i style="transform:translateY(0.95px) scaleX(0.8732)">RIVIERE PILOTE (RIVIERE PILOTE)</i></span></div>
<div class="row" style="top:344px;height:15px"><span class="c c0" style="left:0px;width:205px;padding-left:4.6px"><i style="transform:translateY(0.31px) scaleX(0.8652)">LE PAIN DES COPAINS</i></span><span class="c c1" style="left:206px;width:78px;padding-left:4.7px"><i style="transform:translateY(0.31px) scaleX(1.0328)">Client</i></span><span class="c c2" style="left:285px;width:191px;padding-left:3.9px"><i style="transform:translateY(0.31px) scaleX(0.9899)">4 Zone de l'Espérance</i></span><span class="c c3" style="left:477px;width:75px;padding-left:4.7px"><i style="transform:translateY(0.31px) scaleX(1.0007)">Moyen</i></span><span class="c c4" style="left:553px;width:189px;padding-left:4.3px"><i style="transform:translateY(0.31px) scaleX(0.8545)">BASSIGNAC</i></span><span class="c c5" style="left:743px;width:244px;padding-left:4.5px"><i style="width:32.3px;transform:translateY(0.31px) scaleX(1.0362)">97215&nbsp;</i><i style="transform:translateY(0.31px) scaleX(0.8345)">RIVIERE SALEE (RIVIERE SALEE)</i></span></div>
<div class="row alt" style="top:359px;height:15px"><span class="c c0" style="left:0px;width:205px;padding-left:4.6px"><i style="transform:translateY(0.67px) scaleX(0.8402)">RESTAURANT BEZ THIERRY</i></span><span class="c c1" style="left:206px;width:78px;padding-left:4.7px"><i style="transform:translateY(0.67px) scaleX(1.0074)">Prospect</i></span><span class="c c2" style="left:285px;width:191px;padding-left:3.9px"><i style="transform:translateY(0.67px) scaleX(0.9933)">Rue du cimetière</i></span><span class="c c4" style="left:553px;width:189px;padding-left:4.3px"><i style="transform:translateY(0.67px) scaleX(0.8483)">BEZ THIERRY AUTOENTREPRENEUR</i></span><span class="c c5" style="left:743px;width:244px;padding-left:4.5px"><i style="width:32.3px;transform:translateY(0.67px) scaleX(1.0362)">97140&nbsp;</i><i style="transform:translateY(0.67px) scaleX(0.8374)">CAPESTERRE DE MARIE GALANTE (CAPESTERRE</i></span></div>
<!-- scrollbars -->
<div class="abs" style="left:987px;top:21px;width:15px;height:354px;background:#f0f0f0"></div>
<div class="abs" style="left:994px;top:35.5px;width:1px;height:13.5px;background:#8a8a8a"></div>
<div class="abs" style="left:205px;top:374.5px;width:782px;height:15px;background:#f0f0f0"></div>
<div class="abs" style="left:220px;top:382px;width:230px;height:1px;background:#8c8c8c"></div>
<!-- footer -->
<div class="abs" style="left:0;top:389.5px;width:1002px;height:17.5px;background:#f2f2f2"></div>
<div class="ft" style="left:4.5px;top:393.2px">Compteur</div>
<div class="ft" style="left:700px;width:38.5px;text-align:right;top:393.2px">633</div>
<!-- vertical separators -->
<div class="vs" style="left:205px;top:21px;height:353.5px"></div><div class="vs" style="left:284px;top:21px;height:353.5px"></div><div class="vs" style="left:476px;top:21px;height:353.5px"></div><div class="vs" style="left:552px;top:21px;height:353.5px"></div><div class="vs" style="left:742px;top:21px;height:353.5px"></div>
<div class="vs" style="left:205px;top:390px;height:17px"></div><div class="vs" style="left:284px;top:390px;height:17px"></div><div class="vs" style="left:476px;top:390px;height:17px"></div><div class="vs" style="left:552px;top:390px;height:17px"></div><div class="vs" style="left:742px;top:390px;height:17px"></div>
<!-- header -->
<div class="abs" style="left:0;top:20px;width:1002px;height:1px;background:#d9d9d9"></div>
<div class="hd" style="left:0;width:206px"><div class="ht" style="padding-right:4px">Nom Commercial</div><svg style="left:2px;top:0.4px" width="8" height="9" viewBox="0 0 8 9"><defs><linearGradient id="sg" x1="0" y1="0" x2="0" y2="1"><stop offset="0" stop-color="#3d8fd0"/><stop offset="0.5" stop-color="#7fc0e6"/><stop offset="1" stop-color="#bfe3f4"/></linearGradient></defs><path d="M3.8 0.6 L6.8 4.2 Q6.4 7.6 3.8 7.8 Q1.2 7.6 0.8 4.2 Z" fill="url(#sg)"/><path d="M1 4.3 H6.6" stroke="#eaf6fc" stroke-width="0.7"/></svg><svg style="left:196px;top:6px" width="9" height="10" viewBox="0 0 9 10"><path d="M0.9 0.9 H8.1 L5.4 4.6 V8.6 L3.6 7.4 V4.6 Z" fill="#f4f4f4" stroke="#666" stroke-width="0.95" stroke-linejoin="round"/></svg></div>
<div class="hd" style="left:206px;width:79px"><div class="ht" style="padding-right:2px;transform:scaleX(0.9)">Type</div><svg style="left:2px;top:0.4px" width="8" height="9" viewBox="0 0 8 9"><defs><linearGradient id="sg" x1="0" y1="0" x2="0" y2="1"><stop offset="0" stop-color="#3d8fd0"/><stop offset="0.5" stop-color="#7fc0e6"/><stop offset="1" stop-color="#bfe3f4"/></linearGradient></defs><path d="M3.8 0.6 L6.8 4.2 Q6.4 7.6 3.8 7.8 Q1.2 7.6 0.8 4.2 Z" fill="url(#sg)"/><path d="M1 4.3 H6.6" stroke="#eaf6fc" stroke-width="0.7"/></svg><svg style="left:69px;top:6px" width="9" height="10" viewBox="0 0 9 10"><path d="M0.9 0.9 H8.1 L5.4 4.6 V8.6 L3.6 7.4 V4.6 Z" fill="#f4f4f4" stroke="#666" stroke-width="0.95" stroke-linejoin="round"/></svg></div>
<div class="hd" style="left:285px;width:192px"><div class="ht" style="padding-right:4px">Adresse</div><svg style="left:2px;top:0.4px" width="8" height="9" viewBox="0 0 8 9"><defs><linearGradient id="sg" x1="0" y1="0" x2="0" y2="1"><stop offset="0" stop-color="#3d8fd0"/><stop offset="0.5" stop-color="#7fc0e6"/><stop offset="1" stop-color="#bfe3f4"/></linearGradient></defs><path d="M3.8 0.6 L6.8 4.2 Q6.4 7.6 3.8 7.8 Q1.2 7.6 0.8 4.2 Z" fill="url(#sg)"/><path d="M1 4.3 H6.6" stroke="#eaf6fc" stroke-width="0.7"/></svg><svg style="left:182px;top:6px" width="9" height="10" viewBox="0 0 9 10"><path d="M0.9 0.9 H8.1 L5.4 4.6 V8.6 L3.6 7.4 V4.6 Z" fill="#f4f4f4" stroke="#666" stroke-width="0.95" stroke-linejoin="round"/></svg></div>
<div class="hd" style="left:477px;width:76px"><div class="ht" style="padding-right:3px">Potentiel</div><svg style="left:2px;top:0.4px" width="8" height="9" viewBox="0 0 8 9"><defs><linearGradient id="sg" x1="0" y1="0" x2="0" y2="1"><stop offset="0" stop-color="#3d8fd0"/><stop offset="0.5" stop-color="#7fc0e6"/><stop offset="1" stop-color="#bfe3f4"/></linearGradient></defs><path d="M3.8 0.6 L6.8 4.2 Q6.4 7.6 3.8 7.8 Q1.2 7.6 0.8 4.2 Z" fill="url(#sg)"/><path d="M1 4.3 H6.6" stroke="#eaf6fc" stroke-width="0.7"/></svg><svg style="left:66px;top:6px" width="9" height="10" viewBox="0 0 9 10"><path d="M0.9 0.9 H8.1 L5.4 4.6 V8.6 L3.6 7.4 V4.6 Z" fill="#f4f4f4" stroke="#666" stroke-width="0.95" stroke-linejoin="round"/></svg></div>
<div class="hd hl" style="left:553px;width:190px"><div class="ht" style="padding-left:1px;letter-spacing:0.05px">Raison Sociale</div><svg style="left:2px;top:2px" width="8" height="6" viewBox="0 0 8 6"><path d="M0.8 4.6 L3.4 1.2 L6 4.6 Z" fill="#5f9bcf"/></svg><svg style="left:180px;top:6px" width="9" height="10" viewBox="0 0 9 10"><path d="M0.9 0.9 H8.1 L5.4 4.6 V8.6 L3.6 7.4 V4.6 Z" fill="#f4f4f4" stroke="#666" stroke-width="0.95" stroke-linejoin="round"/></svg></div>
<div class="hd" style="left:743px;width:245px"><div class="ht" style="padding-left:14px;transform:scaleX(1.106)">Ville</div><svg style="left:2px;top:0.4px" width="8" height="9" viewBox="0 0 8 9"><defs><linearGradient id="sg" x1="0" y1="0" x2="0" y2="1"><stop offset="0" stop-color="#3d8fd0"/><stop offset="0.5" stop-color="#7fc0e6"/><stop offset="1" stop-color="#bfe3f4"/></linearGradient></defs><path d="M3.8 0.6 L6.8 4.2 Q6.4 7.6 3.8 7.8 Q1.2 7.6 0.8 4.2 Z" fill="url(#sg)"/><path d="M1 4.3 H6.6" stroke="#eaf6fc" stroke-width="0.7"/></svg></div>
<div class="hd" style="left:988px;width:14px;border-right:none;box-shadow:inset 1px 0 0 #e2e2e2"><svg style="left:3.2px;top:7.6px" width="8" height="6" viewBox="0 0 8 6"><path d="M0.6 0.5 L2.9 2.7 L0.6 4.9 M3.9 0.5 L6.2 2.7 L3.9 4.9" fill="none" stroke="#111" stroke-width="1.25"/></svg></div>
</div>
</body></html>
